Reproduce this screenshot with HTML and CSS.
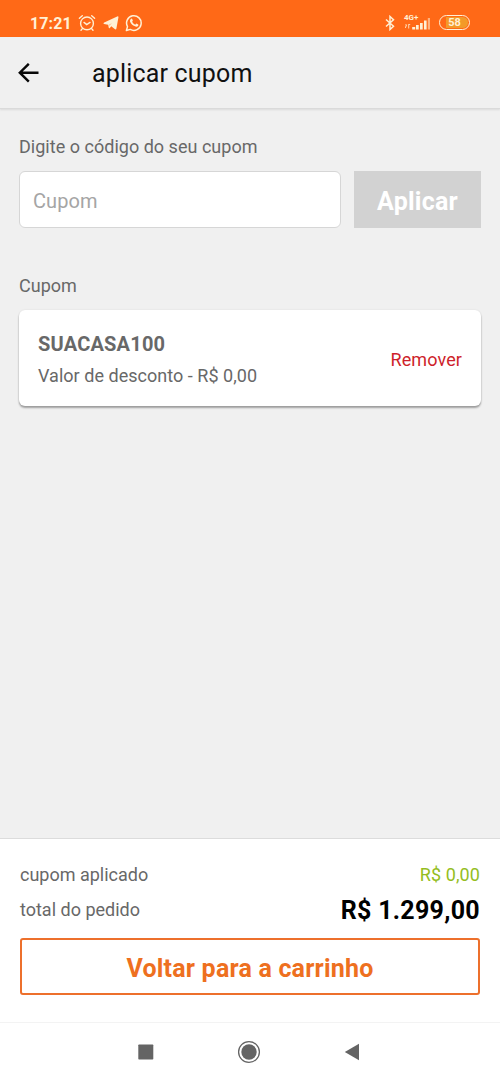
FILE: index.html
```html
<!DOCTYPE html>
<html lang="pt-BR">
<head>
<meta charset="utf-8">
<title>aplicar cupom</title>
<link rel="stylesheet" href="styles.css">
</head>
<body>
<div class="screen">
  <div class="status">
    <span class="clock">17:21</span>
    <svg class="alarm" width="18" height="18" viewBox="0 0 18 18" fill="none" stroke="currentColor" stroke-width="1.4" stroke-linecap="round"><circle cx="9" cy="9.4" r="6.4"/><path d="M1.4 4.2 4.3 1.7M16.6 4.2 13.7 1.7M4.4 14.6 3 16.2M13.6 14.6 15 16.2M6 8.4 8.7 10.6 12 8.4"/></svg>
    <svg class="telegram" width="17" height="14" viewBox="0 0 17 14" fill="currentColor"><path d="M14.2.5Q15.7 0 15.4 1.4L13.4 12.4Q13.1 14 11.7 13L8.3 10.3 6.8 11.9Q5.9 12.7 5.7 11.4L5.2 8.7 1 7.9Q-.2 7.3 1.2 6.5ZM6.4 8.7 6.6 9.8 7 8.8 9 6.9Z"/></svg>
    <svg class="whatsapp" width="18" height="18" viewBox="0 0 18 18"><path d="M1.4 16.5 2.5 12.6A7.3 7.3 0 1 1 5.3 15.4Z" fill="none" stroke="currentColor" stroke-width="1.5" stroke-linejoin="round"/><path d="M6.1 4.7Q6.9 4.3 7.2 5L7.8 6.4Q8 6.9 7.1 7.8 8.1 9.8 10.2 10.7L11.1 9.7Q11.4 9.4 11.9 9.7L13.2 10.4Q13.6 10.7 13.3 11.5 12.5 13 10.6 12.6 6.5 11.6 5 7.6 4.6 5.8 6.1 4.7Z" fill="currentColor"/></svg>
    <svg class="bluetooth" width="10" height="16" viewBox="0 0 10 16" fill="none" stroke="currentColor" stroke-width="1.5"><path d="M1 4.5 8.5 11.2 5 14.5V1.5L8.5 4.8 1 11.5"/></svg>
    <div class="network">
      <span class="network-type">4G+</span>
      <svg width="27" height="13" viewBox="0 0 27 13" fill="currentColor"><path d="M1 7.5H3V8.3L1.8 11H1V10L2 8.3H1ZM4.2 7H6.2V8H5.2V11.5H4.2Z" opacity=".8"/><path d="M8.2 10h3v2.5h-3zM12 8h2.7v4.5H12zM16 6h2.7v6.5H16zM20 3.5h2.6v9H20z"/><path d="M23.8 1h2.2v11.5h-2.2z" opacity=".55"/></svg>
    </div>
    <div class="battery"><span>58</span></div>
  </div>
  <header class="header">
    <svg width="22" height="20" viewBox="0 0 22 20" fill="none" stroke="#080808" stroke-width="2.4"><path d="M21.5 9.7H3M11.8.8 2.8 9.7 11.8 18.6"/></svg>
    <h1>aplicar cupom</h1>
  </header>
  <main class="content">
    <label class="label" for="coupon">Digite o código do seu cupom</label>
    <div class="entry">
      <input id="coupon" class="field" type="text" placeholder="Cupom">
      <button class="apply">Aplicar</button>
    </div>
    <div class="section-title">Cupom</div>
    <section class="card">
      <div>
        <div class="code">SUACASA100</div>
        <div class="discount">Valor de desconto - R$ 0,00</div>
      </div>
      <span class="remove">Remover</span>
    </section>
  </main>
  <footer class="summary">
    <div class="row row-coupon"><span>cupom aplicado</span><span class="saved">R$ 0,00</span></div>
    <div class="row row-total"><span>total do pedido</span><strong class="total">R$ 1.299,00</strong></div>
    <button class="back">Voltar para a carrinho</button>
  </footer>
  <nav class="navigation">
    <svg width="16" height="16" viewBox="0 0 16 16"><rect x=".3" y=".5" width="15" height="15" rx=".7" fill="#646464"/></svg>
    <svg width="24" height="24" viewBox="0 0 24 24"><circle cx="12" cy="12" r="10.4" fill="none" stroke="#646464" stroke-width="1.3"/><circle cx="12" cy="12" r="7.7" fill="#646464"/></svg>
    <svg width="16" height="18" viewBox="0 0 16 18"><path d="M.8 9 15 .8V17.2Z" fill="#646464"/></svg>
  </nav>
</div>
</body>
</html>
```
FILE: styles.css
```css
* { box-sizing: border-box; }
body { margin: 0; font-family: Roboto, sans-serif; color: #686868; }
button, input { font-family: inherit; margin: 0; }
svg { display: block; flex: none; }
.screen { width: 500px; height: 1082px; display: flex; flex-direction: column; background: #f0f0f0; overflow: hidden; }
.status { height: 37px; flex: none; display: flex; align-items: center; padding: 8px 30px 0; background: #ff6917; color: #fff0d5; }
.clock { width: 48px; padding-top: 2px; font-size: 16px; line-height: 20px; font-weight: 700; letter-spacing: .1px; }
.telegram { margin-left: 7px; }
.whatsapp { margin-left: 5px; }
.bluetooth { margin-left: auto; }
.network { position: relative; width: 27px; margin: 2px 8px 0 9px; }
.network-type { position: absolute; left: 0; top: -3px; font-size: 8px; line-height: 8px; font-weight: 700; }
.battery { width: 31px; height: 15px; border: 1.5px solid currentColor; border-radius: 8px; padding: 1px; display: flex; }
.battery span { flex: 1; border-radius: 6px; background: linear-gradient(90deg, #ff6917 20%, #f39a28 20%); text-align: center; font-size: 11px; line-height: 12px; font-weight: 700; }
.header { height: 72px; flex: none; display: flex; align-items: center; gap: 53px; padding: 0 17px; border-bottom: 1px solid #dadada; box-shadow: 0 1px 2px #00000018; color: #111; }
.header h1 { margin: 3px 0 0; font-size: 25px; line-height: 30px; font-weight: 400; letter-spacing: .18px; }
.content { flex: 1; padding: 26px 19px 0; }
.label { display: block; height: 36px; font-size: 18px; line-height: 24px; letter-spacing: .02px; }
.entry { display: flex; gap: 13px; height: 57px; }
.field { width: 322px; border: 1px solid #d6d6d6; border-radius: 6px; padding: 2px 13px 0; background: #fff; font-size: 20px; letter-spacing: .1px; outline: 0; }
.field::placeholder { color: #a5a5a5; opacity: 1; }
.apply { flex: 1; border: 0; padding: 4px 0 0; background: #d2d2d2; color: #fff; font-size: 25px; font-weight: 700; letter-spacing: .25px; }
.section-title { margin: 46px 0 12px; font-size: 18px; line-height: 24px; }
.card { height: 96px; display: flex; align-items: center; justify-content: space-between; padding: 2px 19px 0; border-radius: 6px; background: #fff; box-shadow: 0 2px 2px #00000055, 0 0 2px #00000018; }
.code { padding-top: 1px; font-size: 20px; line-height: 30px; font-weight: 700; letter-spacing: .2px; }
.discount { margin-top: 3px; font-size: 18px; line-height: 28px; letter-spacing: .03px; }
.remove { color: #ce1f2b; font-size: 18px; letter-spacing: .1px; }
.summary { height: 184px; flex: none; padding: 20px 20px 0; background: #fff; border-top: 1px solid #dcdcdc; }
.row { display: flex; justify-content: space-between; align-items: center; font-size: 18px; }
.row-coupon { height: 30px; }
.row-total { height: 40px; }
.saved { color: #94bd22; letter-spacing: .1px; }
.total { color: #000; font-size: 25px; letter-spacing: .3px; padding-top: 2px; }
.back { display: block; width: 100%; height: 57px; margin-top: 9px; padding: 4px 0 0; border: 2px solid #ed702c; border-radius: 3px; background: #fff; color: #ee701f; font-size: 25px; font-weight: 700; letter-spacing: .2px; }
.navigation { height: 60px; flex: none; display: grid; grid-template-columns: 16px 24px 16px; justify-content: center; align-items: center; column-gap: 83px; padding: 0 2px 2px 0; background: #fff; border-top: 1px solid #f3f3f3; }
```
